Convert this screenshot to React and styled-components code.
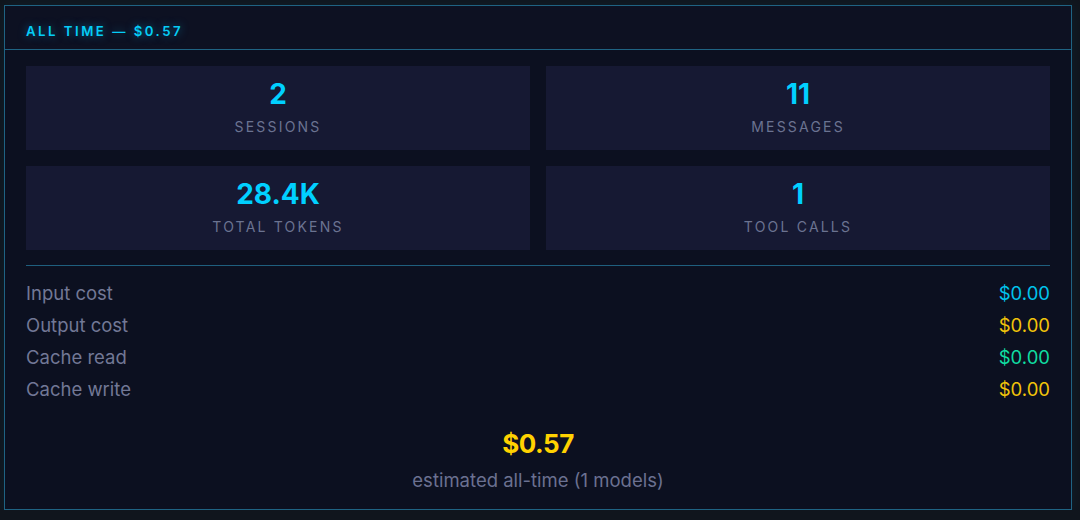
import styled, { createGlobalStyle } from 'styled-components';

const GlobalStyle = createGlobalStyle`
  html, body {
    margin: 0;
    padding: 0;
    background: #10151d;
    font-family: Inter, 'Noto Sans', sans-serif;
  }
`;

const stats = [
  { value: '2', label: 'Sessions' },
  { value: '11', label: 'Messages' },
  { value: '28.4K', label: 'Total tokens' },
  { value: '1', label: 'Tool calls' },
];

const costs = [
  { label: 'Input cost', value: '$0.00', tone: '#00c3ec' },
  { label: 'Output cost', value: '$0.00', tone: '#f2c40a' },
  { label: 'Cache read', value: '$0.00', tone: '#10dca0' },
  { label: 'Cache write', value: '$0.00', tone: '#f2c40a' },
];

function App() {
  return (
    <>
      <GlobalStyle />
      <Page>
        <Panel>
          <Header>All time — $0.57</Header>
          <Body>
            <StatGrid>
              {stats.map((s) => (
                <StatCard key={s.label}>
                  <StatValue>{s.value}</StatValue>
                  <StatLabel>{s.label}</StatLabel>
                </StatCard>
              ))}
            </StatGrid>
            <Divider />
            <CostList>
              {costs.map((c) => (
                <CostRow key={c.label}>
                  <CostLabel>{c.label}</CostLabel>
                  <CostValue $tone={c.tone}>{c.value}</CostValue>
                </CostRow>
              ))}
            </CostList>
            <Total>
              <TotalValue>$0.57</TotalValue>
              <TotalNote>estimated all-time (1 models)</TotalNote>
            </Total>
          </Body>
        </Panel>
      </Page>
    </>
  );
}

const Page = styled.div`
  padding: 5px 8px 0 4px;
`;

const Panel = styled.section`
  border: 1px solid #1f6383;
  background: #0c1020;
  box-shadow: 0 0 14px rgba(0, 140, 190, 0.08);
`;

const Header = styled.h2`
  margin: 0;
  padding: 17px 21px 10px;
  font-size: 13.2px;
  line-height: 16px;
  font-weight: 600;
  letter-spacing: 2.5px;
  text-transform: uppercase;
  color: #05cdf7;
  text-shadow: 0 0 8px rgba(0, 190, 255, 0.5);
  background: #0d1122;
  border-bottom: 1px solid #1f6383;
`;

const Body = styled.div`
  padding: 16px 21px 18px;
`;

const StatGrid = styled.div`
  display: grid;
  grid-template-columns: 1fr 1fr;
  gap: 16px;
`;

const StatCard = styled.div`
  background: #161933;
  height: 84px;
  box-sizing: border-box;
  padding-top: 12px;
  display: flex;
  flex-direction: column;
  align-items: center;
`;

const StatValue = styled.div`
  font-size: 28px;
  line-height: 32px;
  font-weight: 700;
  color: #00d0ff;
`;

const StatLabel = styled.div`
  margin-top: 8px;
  font-size: 14px;
  line-height: 18px;
  letter-spacing: 2.2px;
  text-transform: uppercase;
  color: #6b7391;
`;

const Divider = styled.hr`
  margin: 15px 0 0;
  border: 0;
  height: 1px;
  background: #1f5f7e;
`;

const CostList = styled.div`
  padding-top: 11px;
`;

const CostRow = styled.div`
  display: flex;
  justify-content: space-between;
  align-items: center;
  height: 32px;
  font-size: 18.5px;
`;

const CostLabel = styled.span`
  color: #727896;
`;

const CostValue = styled.span`
  color: ${(p) => p.$tone};
`;

const Total = styled.div`
  margin-top: 22px;
  text-align: center;
`;

const TotalValue = styled.div`
  font-size: 26px;
  line-height: 34px;
  font-weight: 700;
  letter-spacing: -0.5px;
  color: #ffd200;
`;

const TotalNote = styled.div`
  margin-top: 8px;
  font-size: 18.5px;
  line-height: 22px;
  color: #6b7191;
`;

export default App;
